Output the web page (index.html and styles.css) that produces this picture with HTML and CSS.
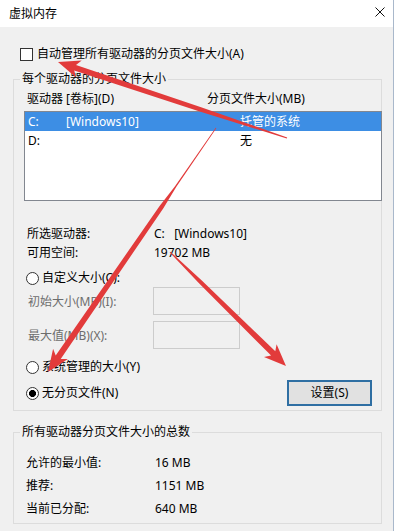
FILE: index.html
```html
<!DOCTYPE html>
<html lang="zh-CN">
<head>
<meta charset="utf-8">
<title>虚拟内存</title>
<link rel="stylesheet" href="styles.css">
</head>
<body>
<div class="window">
  <div class="titlebar">
    <span class="title">虚拟内存</span>
    <svg class="close" width="10" height="10" viewBox="0 0 10 10"><path d="M0.5 0.5 L9.5 9.5 M9.5 0.5 L0.5 9.5" stroke="#111" stroke-width="1" fill="none"/></svg>
  </div>
  <div class="content">
    <div class="check-row"><span class="checkbox"></span><span>自动管理所有驱动器的分页文件大小(A)</span></div>
    <fieldset class="group group-drives">
      <legend>每个驱动器的分页文件大小</legend>
      <div class="list-header"><span class="col-drive">驱动器 [卷标](D)</span><span>分页文件大小(MB)</span></div>
      <div class="listbox">
        <div class="list-row selected"><span class="c-letter">C:</span><span class="c-label">[Windows10]</span><span>托管的系统</span></div>
        <div class="list-row"><span class="c-letter">D:</span><span class="c-label"></span><span>无</span></div>
      </div>
      <div class="info-grid">
        <span>所选驱动器:</span><span>C:&nbsp;&nbsp;&nbsp;[Windows10]</span>
        <span>可用空间:</span><span>19702 MB</span>
      </div>
      <div class="radio-row first"><span class="radio"></span><span>自定义大小(C):</span></div>
      <div class="input-row first"><span class="input-label">初始大小(MB)(I):</span><span class="edit"></span></div>
      <div class="input-row second"><span class="input-label">最大值(MB)(X):</span><span class="edit"></span></div>
      <div class="radio-row second"><span class="radio"></span><span>系统管理的大小(Y)</span></div>
      <div class="bottom-row">
        <div class="radio-line"><span class="radio checked"></span><span>无分页文件(N)</span></div>
        <button class="btn">设置(S)</button>
      </div>
    </fieldset>
    <fieldset class="group group-total">
      <legend>所有驱动器分页文件大小的总数</legend>
      <div class="total-grid">
        <span>允许的最小值:</span><span>16 MB</span>
        <span>推荐:</span><span>1151 MB</span>
        <span>当前已分配:</span><span>640 MB</span>
      </div>
    </fieldset>
  </div>
</div>
<svg class="arrows" width="397" height="531" viewBox="0 0 397 531">
  <polygon points="58,62 81.7,60.4 76.0,64.9 201.1,107.2 287.2,137.4 286.8,138.6 199.7,111.4 74.2,70.5 76.1,77.4"/>
  <polygon points="48,372 53.1,348.8 55.7,355.5 159.6,205.95 175.0,186.2 215.7,127.8 216.3,128.2 176.2,187.0 163.2,208.45 60.7,358.9 67.9,359.0"/>
  <polygon points="286,366 276.6,344.2 275.3,351.3 201.8,280.5 170.35,251.64 169.65,252.36 199.0,283.3 271.1,355.5 264.0,357.0"/>
</svg>
</body>
</html>
```
FILE: styles.css
```css
html, body {
  margin: 0;
  padding: 0;
}
body {
  width: 397px;
  height: 531px;
  background: #ffffff;
  font-family: "Noto Sans", "Noto Sans CJK SC", sans-serif;
  font-size: 12px;
  color: #000;
  position: relative;
  overflow: hidden;
}
.window {
  width: 393px;
  height: 531px;
  border-right: 1px solid #a9b8cb;
  background: #f0f0f0;
  display: flex;
  flex-direction: column;
}
.titlebar {
  height: 27px;
  flex: none;
  background: #ffffff;
  display: flex;
  align-items: center;
  justify-content: space-between;
  padding: 0 8px 0 9px;
  line-height: 16px;
}
.close {
  display: block;
  margin-top: -3px;
}
.content {
  display: flex;
  flex-direction: column;
}
.check-row {
  margin-top: 19px;
  height: 16px;
  line-height: 16px;
  padding-left: 20px;
  display: flex;
  align-items: center;
}
.checkbox {
  width: 13px;
  height: 13px;
  box-sizing: border-box;
  border: 1px solid #333;
  background: #fff;
  margin-right: 4px;
}
.group {
  margin: 0 0 0 13px;
  width: 369px;
  box-sizing: border-box;
  padding: 0;
  border: 1px solid #dcdcdc;
  min-inline-size: 0;
}
.group legend {
  margin-left: 6px;
  padding: 0 2px;
  line-height: 16px;
}
.group-drives {
  margin-top: 9px;
  padding-bottom: 4px;
}
.list-header {
  margin-top: 4px;
  line-height: 16px;
  padding-left: 13px;
  display: flex;
}
.col-drive {
  width: 180px;
}
.listbox {
  margin: 4px -1px 0 10px;
  height: 90px;
  box-sizing: border-box;
  border: 1px solid #828790;
  background: #fff;
}
.list-row {
  height: 19px;
  line-height: 19px;
  padding-left: 3px;
  display: flex;
}
.list-row.selected {
  background: #3d8ee4;
  color: #fff;
}
.c-letter {
  width: 38px;
}
.c-label {
  width: 174px;
}
.info-grid {
  margin-top: 23px;
  padding-left: 13px;
  display: grid;
  grid-template-columns: 127px auto;
  line-height: 19px;
}
.radio-row, .radio-line {
  height: 16px;
  line-height: 16px;
  display: flex;
  align-items: center;
}
.radio-row {
  padding-left: 12px;
}
.radio-row.first {
  margin-top: 8px;
}
.radio-row.second {
  margin-top: 10px;
}
.radio {
  width: 13px;
  height: 13px;
  box-sizing: border-box;
  border: 1px solid #333;
  border-radius: 50%;
  background: #fff;
  margin-right: 3px;
}
.radio.checked {
  background: radial-gradient(circle, #000 0, #000 3.2px, #fff 3.8px);
}
.input-row {
  height: 28px;
  padding-left: 14px;
  display: flex;
  align-items: center;
  color: #6d6d6d;
}
.input-row.first {
  margin-top: 1px;
}
.input-row.second {
  margin-top: 6px;
}
.input-label {
  width: 125px;
}
.edit {
  width: 87px;
  height: 28px;
  box-sizing: border-box;
  border: 1px solid #cccccc;
  background: #f0f0f0;
}
.bottom-row {
  margin-top: 5px;
  height: 26px;
  padding: 0 9px 0 12px;
  display: flex;
  align-items: center;
  justify-content: space-between;
}
.btn {
  width: 85px;
  height: 26px;
  box-sizing: border-box;
  border: 2px solid #2f6fa3;
  background: #e1e1e1;
  font-family: "Noto Sans", "Noto Sans CJK SC", sans-serif;
  font-size: 12px;
  color: #000;
  padding: 0;
  line-height: 16px;
}
.group-total {
  margin-top: 13px;
  padding-bottom: 3px;
}
.total-grid {
  margin-top: 11px;
  padding-left: 12px;
  display: grid;
  grid-template-columns: 129px auto;
  line-height: 23px;
}
.arrows {
  position: absolute;
  left: 0;
  top: 0;
  pointer-events: none;
  fill: #e23b3b;
}
```
